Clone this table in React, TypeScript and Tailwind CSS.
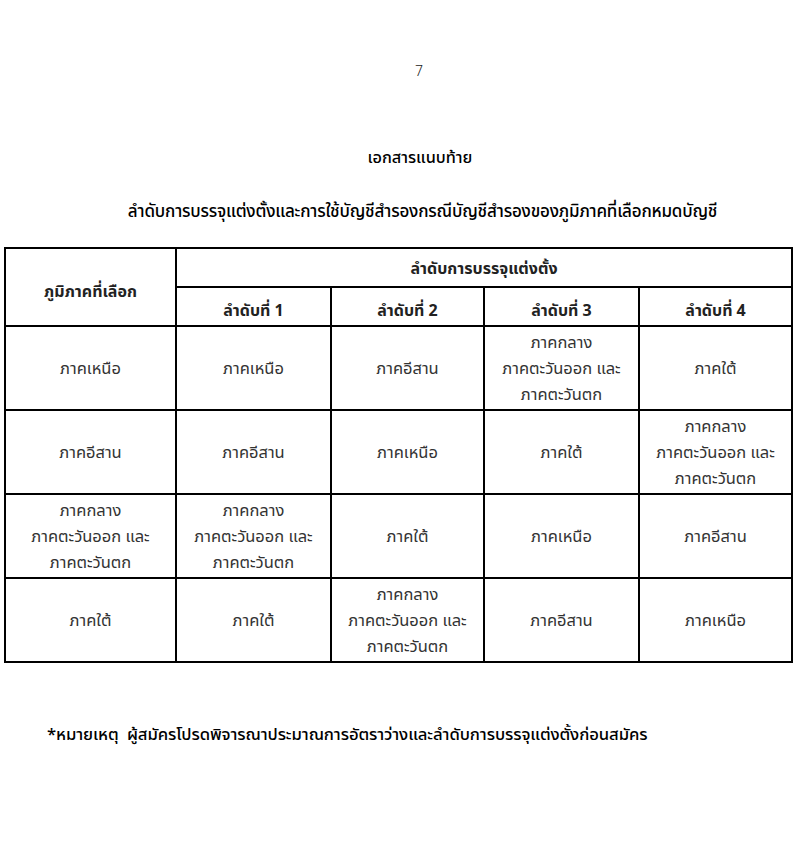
import React from "react";

const thai = { fontFamily: '"Noto Sans Thai", Tahoma, "Noto Sans", "DejaVu Sans", sans-serif' };
const narrow = { fontFamily: '"Noto Sans Thai", "Liberation Sans Narrow", "Noto Sans", sans-serif' };

const C = "ภาคกลาง\nภาคตะวันออก และ\nภาคตะวันตก";

const rows: string[][] = [
  ["ภาคเหนือ", "ภาคเหนือ", "ภาคอีสาน", C, "ภาคใต้"],
  ["ภาคอีสาน", "ภาคอีสาน", "ภาคเหนือ", "ภาคใต้", C],
  [C, C, "ภาคใต้", "ภาคเหนือ", "ภาคอีสาน"],
  ["ภาคใต้", "ภาคใต้", C, "ภาคอีสาน", "ภาคเหนือ"],
];

function Cell({ text }: { text: string }) {
  return (
    <td className="border-2 border-black pt-[2px] text-center align-middle text-[16.5px] leading-[26px] text-[#333] whitespace-pre-line">
      {text}
    </td>
  );
}

export default function App() {
  return (
    <div className="min-h-[849px] w-[800px] bg-white text-black">
      <div className="pt-[58px] pl-[38px] text-center text-[14px] leading-[28px] font-light text-[#222]" style={narrow}>
        7
      </div>
      <div className="mt-[58px] pl-[40px] text-center text-[16.3px] leading-[28px] font-medium" style={narrow}>
        เอกสารแนบท้าย
      </div>
      <div className="mt-[26px] pl-[45px] text-center text-[17px] leading-[28px] font-medium tracking-[-0.2px]" style={narrow}>
        ลำดับการบรรจุแต่งตั้งและการใช้บัญชีสำรองกรณีบัญชีสำรองของภูมิภาคที่เลือกหมดบัญชี
      </div>
      <div className="mt-[21px] pl-[4px]" style={thai}>
        <table className="w-[787px] table-fixed border-collapse">
          <colgroup>
            <col className="w-[171px]" />
            <col className="w-[155px]" />
            <col className="w-[153px]" />
            <col className="w-[155px]" />
            <col className="w-[153px]" />
          </colgroup>
          <thead>
            <tr className="h-[39px]">
              <th rowSpan={2} className="border-2 border-black pt-[10px] text-center align-middle text-[16px] font-bold text-[#222]">
                ภูมิภาคที่เลือก
              </th>
              <th colSpan={4} className="border-2 border-black pt-[2px] text-center align-middle text-[16px] font-bold text-[#222]">
                ลำดับการบรรจุแต่งตั้ง
              </th>
            </tr>
            <tr className="h-[39px]">
              {[1, 2, 3, 4].map((n) => (
                <th key={n} className="border-2 border-black pt-[8px] text-center align-middle text-[16px] font-bold text-[#222]">
                  ลำดับที่ {n}
                </th>
              ))}
            </tr>
          </thead>
          <tbody>
            {rows.map((r, i) => (
              <tr key={i} className="h-[84px]">
                {r.map((t, j) => (
                  <Cell key={j} text={t} />
                ))}
              </tr>
            ))}
          </tbody>
        </table>
      </div>
      <div className="mt-[58px] pl-[47px] text-[16.7px] leading-[28px] font-medium tracking-[-0.1px]" style={narrow}>
        *หมายเหตุ&nbsp; ผู้สมัครโปรดพิจารณาประมาณการอัตราว่างและลำดับการบรรจุแต่งตั้งก่อนสมัคร
      </div>
    </div>
  );
}
